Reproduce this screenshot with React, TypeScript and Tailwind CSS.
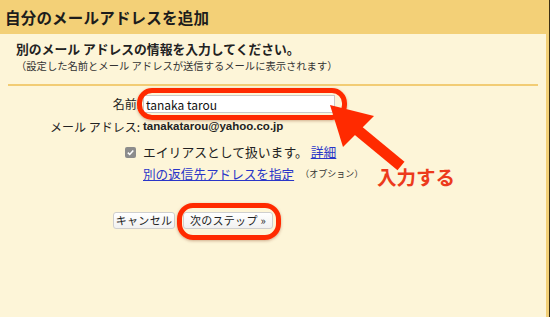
import React from "react";

const font = { fontFamily: '"Noto Sans CJK JP", "Noto Sans", sans-serif' };

export default function App() {
  return (
    <div
      className="relative w-[550px] h-[317px] overflow-hidden bg-[#fdf5d8] border-r border-[#3b2f14] text-[#222]"
      style={font}
    >
      <div className="h-[34px] bg-[#f3d077] flex items-center pl-[5px]">
        <h1 className="text-[15.5px] font-bold leading-none tracking-[0.2px] text-[#1c1c1c] mt-[2px]">
          自分のメールアドレスを追加
        </h1>
      </div>
      <div className="h-[283px] border-r-[3px] border-[#f3d077]">
        <div className="pl-[16px] pt-[7px]">
          <p className="text-[12.8px] font-bold leading-[16px]">
            別のメール アドレスの情報を入力してください。
          </p>
          <p className="text-[10.3px] leading-[14px] mt-[2px] text-[#333]">
            （設定した名前とメール アドレスが送信するメールに表示されます）
          </p>
        </div>
        <div className="ml-[8px] mr-[8px] mt-[11px] h-[2px] bg-[#f2cc74]" />
        <div className="grid grid-cols-[140px_1fr] gap-x-[3px] mt-[9px] text-[12px]">
          <div className="h-[18px] flex items-center justify-end">名前:</div>
          <div className="h-[18px]">
            <input
              readOnly
              value="tanaka tarou"
              className="w-[192px] h-[18px] bg-white border border-[#c9c9c9] px-[2px] text-[12px] leading-none text-[#111] outline-none"
              style={font}
            />
          </div>

          <div className="h-[16px] mt-[6px] flex items-center justify-end">メール アドレス:</div>
          <div className="h-[16px] mt-[6px] flex items-center font-bold text-[11.5px]" style={{ fontFamily: '"Liberation Sans", Arial, sans-serif' }}>
            tanakatarou@yahoo.co.jp
          </div>

          <div className="h-[16px] mt-[9px] flex items-center justify-end pr-[4px]">
            <span className="w-[11px] h-[11px] rounded-[2px] bg-[#8c8c8c] flex items-center justify-center">
              <svg width="9" height="9" viewBox="0 0 9 9">
                <path d="M1.8 4.6 L3.7 6.5 L7.3 2.4" fill="none" stroke="#fff" strokeWidth="1.5" />
              </svg>
            </span>
          </div>
          <div className="h-[16px] mt-[9px] flex items-center text-[12.8px]">
            エイリアスとして扱います。
            <a className="ml-[3px] text-[#2a36c8] underline">詳細</a>
          </div>

          <div className="h-[16px] mt-[6px]" />
          <div className="h-[16px] mt-[6px] flex items-center">
            <a className="text-[12.6px] text-[#2a36c8] underline">別の返信先アドレスを指定</a>
            <span className="ml-[6px] text-[9px] text-[#333]">（オプション）</span>
          </div>
        </div>
        <div className="flex gap-[8px] pl-[113px] mt-[30px]">
          <button className="w-[62px] h-[17px] rounded-[3px] border border-[#cfcfcf] bg-gradient-to-b from-white to-[#f1f1f1] text-[11px] leading-none tracking-[0.3px] text-[#222] flex items-center justify-center" style={font}>
            キャンセル
          </button>
          <button className="w-[90px] h-[17px] rounded-[3px] border border-[#cfcfcf] bg-gradient-to-b from-white to-[#f1f1f1] text-[11px] leading-none tracking-[0.3px] text-[#222] flex items-center justify-center" style={font}>
            次のステップ »
          </button>
        </div>
      </div>

      {/* annotations */}
      <div className="absolute left-[137px] top-[88px] w-[210px] h-[32px] rounded-[15px] border-[5px] border-[#ff2a00] shadow-[0_1px_3px_rgba(120,40,0,0.35)]" />
      <div className="absolute left-[177px] top-[203px] w-[104px] h-[37px] rounded-[16px] border-[5px] border-[#ff2a00] shadow-[0_1px_3px_rgba(120,40,0,0.35)]" />
      <svg className="absolute left-0 top-0" width="550" height="317" viewBox="0 0 550 317">
        <line x1="355" y1="128" x2="401" y2="166" stroke="#ff2a00" strokeWidth="11" />
        <polygon points="330,105 374,116 343,147" fill="#ff2a00" />
      </svg>
      <div className="absolute left-[377px] top-[163px] text-[19.5px] leading-[28px] font-bold text-[#ec3a1c]">
        入力する
      </div>
    </div>
  );
}
